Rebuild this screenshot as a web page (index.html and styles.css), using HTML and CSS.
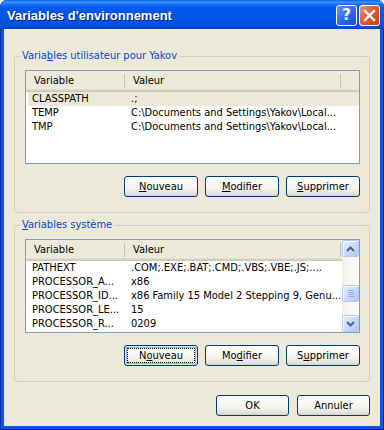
FILE: index.html
```html
<!DOCTYPE html>
<html lang="fr">
<head>
    <meta charset="UTF-8">
    <title>Variables d'environnement</title>
    <link rel="stylesheet" href="styles.css">
</head>
<body>

<div class="window">
    <!-- Title bar -->
    <div class="titlebar">
        <span class="title">Variables d'environnement</span>
        <div class="title-btns">
            <span class="tbtn help">?</span>
            <span class="tbtn close">
                <svg width="13" height="13" viewBox="0 0 13 13">
                    <path d="M2 2 L11 11 M11 2 L2 11" stroke="#fff" stroke-width="2.4" stroke-linecap="square"/>
                </svg>
            </span>
        </div>
    </div>

    <div class="client">
        <!-- User variables -->
        <fieldset class="group">
            <legend>Varia<u>b</u>les utilisateur pour Yakov</legend>
            <div class="list">
                <div class="list-main">
                    <div class="list-head">
                        <div class="hcol hcol1">Variable</div>
                        <div class="hcol hcol2">Valeur</div>
                    </div>
                    <div class="row selected"><span>CLASSPATH</span><span class="val">.;</span></div>
                    <div class="row"><span>TEMP</span><span class="val">C:\Documents and Settings\Yakov\Local...</span></div>
                    <div class="row"><span>TMP</span><span class="val">C:\Documents and Settings\Yakov\Local...</span></div>
                </div>
            </div>
            <div class="btn-row">
                <button class="btn"><u>N</u>ouveau</button>
                <button class="btn"><u>M</u>odifier</button>
                <button class="btn"><u>S</u>upprimer</button>
            </div>
        </fieldset>

        <!-- System variables -->
        <fieldset class="group group2">
            <legend><u>V</u>ariables système</legend>
            <div class="list">
                <div class="list-main">
                    <div class="list-head">
                        <div class="hcol hcol1">Variable</div>
                        <div class="hcol hcol2">Valeur</div>
                    </div>
                    <div class="row"><span>PATHEXT</span><span class="val">.COM;.EXE;.BAT;.CMD;.VBS;.VBE;.JS;....</span></div>
                    <div class="row"><span>PROCESSOR_A...</span><span class="val">x86</span></div>
                    <div class="row"><span>PROCESSOR_ID...</span><span class="val">x86 Family 15 Model 2 Stepping 9, Genu...</span></div>
                    <div class="row"><span>PROCESSOR_LE...</span><span class="val">15</span></div>
                    <div class="row"><span>PROCESSOR_R...</span><span class="val">0209</span></div>
                </div>
                <div class="scrollbar">
                    <div class="sb-btn">
                        <svg width="9" height="6" viewBox="0 0 9 6"><path d="M1 5 L4.5 1.5 L8 5" fill="none" stroke="#4D6185" stroke-width="2"/></svg>
                    </div>
                    <div class="sb-track">
                        <div class="sb-thumb">
                            <span></span><span></span><span></span><span></span>
                        </div>
                    </div>
                    <div class="sb-btn">
                        <svg width="9" height="6" viewBox="0 0 9 6"><path d="M1 1 L4.5 4.5 L8 1" fill="none" stroke="#4D6185" stroke-width="2"/></svg>
                    </div>
                </div>
            </div>
            <div class="btn-row">
                <button class="btn focused">N<u>o</u>uveau</button>
                <button class="btn">Mo<u>d</u>ifier</button>
                <button class="btn">S<u>u</u>pprimer</button>
            </div>
        </fieldset>

        <!-- Dialog buttons -->
        <div class="dialog-btns">
            <button class="btn">OK</button>
            <button class="btn">Annuler</button>
        </div>
    </div>
</div>

</body>
</html>
```

FILE: styles.css
```css
body {
    margin: 0;
    background: #ffffff;
    font-family: "DejaVu Sans Condensed", "Liberation Sans", Arial, sans-serif;
    font-size: 11px;
}
/* Window frame */
.window {
    width: 384px;
    height: 430px;
    box-sizing: border-box;
    display: flex;
    flex-direction: column;
    background: #0856E8;
    border-radius: 7px 7px 0 0;
    padding: 0 4px 4px 4px;
    box-shadow: inset 1px 0 #0831A8, inset -1px 0 #00138C, inset 0 -1px #00138C;
}
/* Title bar */
.titlebar {
    height: 29px;
    margin: 0 -4px;
    padding: 0 4px 0 7px;
    display: flex;
    align-items: center;
    border-radius: 7px 7px 0 0;
    background: linear-gradient(#0A5EEC 0, #3D95FF 2px, #1C71F7 4px, #0058EE 8px, #0055E5 20px, #0050DA 26px, #0042C0 29px);
}
.title {
    color: #ffffff;
    font-family: "Liberation Sans", Arial, sans-serif;
    font-weight: bold;
    font-size: 13px;
    text-shadow: 1px 1px #0A1883;
    margin-top: 1px;
}
.title-btns {
    margin-left: auto;
    display: flex;
    gap: 2px;
    margin-top: 1px;
}
.tbtn {
    width: 21px;
    height: 21px;
    box-sizing: border-box;
    border: 1px solid #ffffff;
    border-radius: 3px;
    display: flex;
    align-items: center;
    justify-content: center;
    color: #ffffff;
}
.help {
    background: linear-gradient(135deg, #5C95FA, #2A63EE 60%, #1A4FD8);
    font-family: "DejaVu Sans", sans-serif;
    font-weight: bold;
    font-size: 15px;
}
.close {
    background: linear-gradient(135deg, #EE8F6F, #E2562C 50%, #C8401A);
}
/* Client area */
.client {
    flex: 1;
    background: #ECE9D8;
    padding: 0 10px;
    display: flex;
    flex-direction: column;
}
/* Group boxes */
.group {
    margin: 20px 0 0 0;
    padding: 7px 9px 15px 10px;
    border: 1px solid #D0D0BF;
    border-radius: 3px;
}
.group2 {
    margin-top: 5px;
}
.group legend {
    color: #0046D5;
    line-height: 14px;
    padding: 0 2px;
    margin-left: -5px;
}
/* List view */
.list {
    height: 94px;
    box-sizing: border-box;
    border: 1px solid #7F9DB9;
    background: #ffffff;
    display: flex;
}
.list-main {
    flex: 1;
    overflow: hidden;
}
.list-head {
    height: 21px;
    display: flex;
    align-items: center;
    background: #EBEADB;
    box-shadow: inset 0 -1px #CBC7B8, inset 0 -2px #D6D2C2, inset 0 -3px #E2DECD;
}
.hcol {
    box-sizing: border-box;
    height: 14px;
    line-height: 14px;
    padding-left: 8px;
    border-right: 1px solid #C7C5B2;
    margin-top: -2px;
}
.hcol1 {
    width: 99px;
}
.hcol2 {
    width: 216px;
}
.row {
    display: grid;
    grid-template-columns: 97px 215px;
    height: 14px;
    line-height: 14px;
    margin-left: 2px;
    white-space: nowrap;
}
.row span {
    padding-left: 4px;
    overflow: hidden;
}
.row .val {
    padding-left: 6px;
}
.row.selected {
    background: #ECE9D8;
}
/* Scrollbar */
.scrollbar {
    width: 17px;
    display: flex;
    flex-direction: column;
    background: linear-gradient(90deg, #F3F1EC, #FEFEFB);
}
.sb-btn,
.sb-thumb {
    box-sizing: border-box;
    width: 17px;
    border: 1px solid #B4C8F6;
    border-radius: 2px;
    background: linear-gradient(135deg, #E6EEFD, #C6D6FA 60%, #B4C7F3);
    box-shadow: inset 1px 1px #F4F8FF;
}
.sb-btn {
    height: 17px;
    display: flex;
    align-items: center;
    justify-content: center;
}
.sb-track {
    flex: 1;
}
.sb-thumb {
    height: 17px;
    margin-top: 28px;
    display: flex;
    flex-direction: column;
    align-items: center;
    justify-content: center;
    gap: 1px;
}
.sb-thumb span {
    width: 6px;
    height: 1px;
    background: #8CB0F8;
}
/* Buttons */
.btn-row {
    display: flex;
    justify-content: flex-end;
    gap: 7px;
    margin-top: 12px;
}
.btn {
    width: 74px;
    height: 21px;
    padding: 0;
    font-family: "DejaVu Sans Condensed", "Liberation Sans", Arial, sans-serif;
    font-size: 11px;
    color: #000000;
    border: 1px solid #003C74;
    border-radius: 3px;
    background: linear-gradient(#FFFFFF, #F5F4EF 60%, #E3E0D6 90%, #D6D0C5);
}
.btn.focused {
    box-shadow: inset 0 0 0 1px #CEE7FF, inset 0 0 0 2px #98B8EA;
    outline: 1px dotted #000000;
    outline-offset: -4px;
}
.dialog-btns {
    display: flex;
    justify-content: flex-end;
    gap: 8px;
    margin-top: 13px;
}
.dialog-btns .btn {
    width: 73px;
}
```
